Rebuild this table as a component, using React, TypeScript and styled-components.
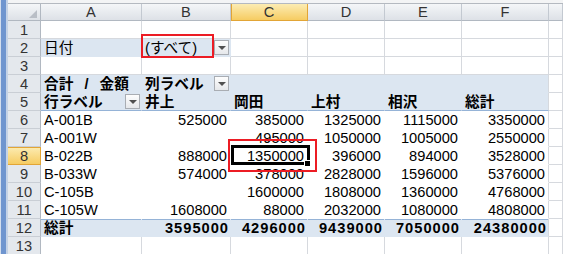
import React from 'react';
import styled, { createGlobalStyle } from 'styled-components';

const GlobalStyle = createGlobalStyle`
	html, body {
		margin: 0;
		padding: 0;
		background: #ffffff;
		overflow: hidden;
	}
	body {
		font-family: 'Liberation Sans', 'Noto Sans CJK JP', sans-serif;
		font-size: 14.67px;
		color: #000000;
	}
`;

type Row = { label: string; values: (number | null)[] };

const names = ['井上', '岡田', '上村', '相沢', '総計'];

const rows: Row[] = [
	{ label: 'A-001B', values: [525000, 385000, 1325000, 1115000, 3350000] },
	{ label: 'A-001W', values: [null, 495000, 1050000, 1005000, 2550000] },
	{ label: 'B-022B', values: [888000, 1350000, 396000, 894000, 3528000] },
	{ label: 'B-033W', values: [574000, 378000, 2828000, 1596000, 5376000] },
	{ label: 'C-105B', values: [null, 1600000, 1808000, 1360000, 4768000] },
	{ label: 'C-105W', values: [1608000, 88000, 2032000, 1080000, 4808000] },
];

const totals = [3595000, 4296000, 9439000, 7050000, 24380000];

const letters = ['A', 'B', 'C', 'D', 'E', 'F', ''];

const App = () => {
	return (
		<Window>
			<GlobalStyle />
			<FrameEdge />
			<Sheet>
				<TopStrip />
				<Grid>
					<Corner />
					{letters.map((l) => (
						<ColHead key={l || 'g'} $active={l === 'C'}>
							{l}
						</ColHead>
					))}

					<RowHead>1</RowHead>
					{letters.map((l) => (
						<Cell key={'r1' + l} />
					))}

					<RowHead>2</RowHead>
					<Cell $fill="band">日付</Cell>
					<Cell $fill="band" $anchor>
						<span>(すべて)</span>
						<Dropdown />
						<Mark $left={-1} $top={-5} $w={73} $h={24} />
					</Cell>
					{letters.slice(2).map((l) => (
						<Cell key={'r2' + l} />
					))}

					<RowHead>3</RowHead>
					{letters.map((l) => (
						<Cell key={'r3' + l} />
					))}

					<RowHead>4</RowHead>
					<Cell $fill="band" $bold>
						<Spaced>合計 / 金額</Spaced>
					</Cell>
					<Cell $fill="band" $bold>
						<span>列ラベル</span>
						<Dropdown />
					</Cell>
					<Cell $fill="band" />
					<Cell $fill="band" />
					<Cell $fill="band" />
					<Cell $fill="band" $edge />
					<Cell />

					<RowHead>5</RowHead>
					<Cell $fill="band" $bold $line="bottom">
						<span>行ラベル</span>
						<Dropdown />
					</Cell>
					{names.map((n, i) => (
						<Cell key={n} $fill="band" $bold $line="bottom" $edge={i === 4}>
							{n}
						</Cell>
					))}
					<Cell />

					{rows.map((r, ri) => (
						<React.Fragment key={r.label}>
							<RowHead $active={ri === 2}>{ri + 6}</RowHead>
							<Cell $fill="body">{r.label}</Cell>
							{r.values.map((v, vi) => (
								<Cell
									key={vi}
									$fill="body"
									$num
									$edge={vi === 4}
									$selected={ri === 2 && vi === 1}
									$anchor={ri === 2 && vi === 1}
								>
									{v ?? ''}
									{ri === 2 && vi === 1 && <Mark $left={-3} $top={-8} $w={89} $h={33} />}
								</Cell>
							))}
							<Cell />
						</React.Fragment>
					))}

					<RowHead>12</RowHead>
					<Cell $fill="band" $bold $line="top">
						総計
					</Cell>
					{totals.map((t, i) => (
						<Cell key={i} $fill="band" $bold $num $wide $line="top" $edge={i === 4}>
							{t}
						</Cell>
					))}
					<Cell />

					<RowHead>13</RowHead>
					{letters.map((l) => (
						<Cell key={'r13' + l} />
					))}
				</Grid>
			</Sheet>
		</Window>
	);
};

export default App;

const Window = styled.div`
	width: 563px;
	height: 254px;
	display: flex;
	overflow: hidden;
	background: #ffffff;
`;

const FrameEdge = styled.div`
	width: 8px;
	flex-shrink: 0;
	background: linear-gradient(
		to right,
		#d3deee 0 1px,
		#6f95cf 1px 6px,
		#c4d2e6 6px 8px
	);
`;

const Sheet = styled.div`
	flex: 1;
	display: flex;
	flex-direction: column;
	min-width: 0;
`;

const TopStrip = styled.div`
	height: 4px;
	flex-shrink: 0;
	box-sizing: border-box;
	background: #f3f4f5;
	border-bottom: 1px solid #b4b9c0;
`;

const Grid = styled.div`
	display: grid;
	grid-template-columns: 33px 101px 89px 77px 77px 77px 87px 1fr;
	grid-template-rows: 17px;
	grid-auto-rows: 18px;

	> * {
		box-sizing: border-box;
		min-width: 0;
	}
`;

const headBg = 'linear-gradient(#f4f6f8, #dde1e7)';
const activeBg = 'linear-gradient(#fcecb3, #f6cc62)';

const Corner = styled.div`
	position: relative;
	background: ${headBg};
	border-right: 1px solid #b1b8c1;
	border-bottom: 1px solid #b1b8c1;

	&::after {
		content: '';
		position: absolute;
		right: 3px;
		bottom: 2px;
		border-style: solid;
		border-width: 0 0 8px 8px;
		border-color: transparent transparent #b9bec6 transparent;
	}
`;

const ColHead = styled.div<{ $active?: boolean }>`
	display: flex;
	align-items: center;
	justify-content: center;
	line-height: 16px;
	color: #333333;
	background: ${(p) => (p.$active ? activeBg : headBg)};
	border-right: 1px solid ${(p) => (p.$active ? '#e2a536' : '#c3c9d1')};
	border-bottom: 1px solid ${(p) => (p.$active ? '#e2a536' : '#b1b8c1')};
	box-shadow: ${(p) => (p.$active ? 'inset 1px 0 0 #e2a536' : 'none')};
`;

const RowHead = styled.div<{ $active?: boolean }>`
	display: flex;
	align-items: flex-end;
	justify-content: center;
	line-height: 16px;
	color: #333333;
	background: ${(p) => (p.$active ? activeBg : '#e4e8ed')};
	border-right: 1px solid ${(p) => (p.$active ? '#e2a536' : '#b1b8c1')};
	border-bottom: 1px solid ${(p) => (p.$active ? '#e2a536' : '#c9ced5')};
	box-shadow: ${(p) => (p.$active ? 'inset 0 1px 0 #e2a536' : 'none')};
`;

type CellProps = {
	$fill?: 'plain' | 'band' | 'body';
	$bold?: boolean;
	$num?: boolean;
	$wide?: boolean;
	$edge?: boolean;
	$line?: 'top' | 'bottom';
	$selected?: boolean;
	$anchor?: boolean;
};

const grid = '#d6d9de';
const bandLine = '#95b3d7';

const Cell = styled.div<CellProps>`
	position: ${(p) => (p.$anchor ? 'relative' : 'static')};
	display: flex;
	align-items: flex-end;
	justify-content: ${(p) => (p.$num ? 'flex-end' : 'space-between')};
	line-height: 16px;
	padding: 0 ${(p) => (p.$num ? (p.$wide ? '1px' : '3px') : '1px')} 0 3px;
	white-space: nowrap;
	font-weight: ${(p) => (p.$bold ? 700 : 400)};
	letter-spacing: ${(p) => (p.$wide ? '1px' : '0')};
	background: ${(p) => (p.$fill === 'band' ? '#dce6f1' : '#ffffff')};
	border-right: 1px solid
		${(p) => (!p.$fill || p.$fill === 'plain' || p.$edge ? grid : 'transparent')};
	border-bottom: 1px solid
		${(p) =>
			p.$line === 'bottom'
				? bandLine
				: !p.$fill || p.$fill === 'plain'
				? grid
				: 'transparent'};
	box-shadow: ${(p) => (p.$line === 'top' ? `inset 0 1px 0 ${bandLine}` : 'none')};

	${(p) =>
		p.$selected &&
		`
		&::before {
			content: '';
			position: absolute;
			left: 0;
			top: -2px;
			right: -3px;
			bottom: -1px;
			border: 3px solid #000000;
		}
		&::after {
			content: '';
			position: absolute;
			right: -4px;
			bottom: -3px;
			width: 5px;
			height: 5px;
			background: #000000;
			border: 1px solid #ffffff;
		}
	`}
`;

const Spaced = styled.span`
	word-spacing: 7px;
`;

const Dropdown = styled.div`
	width: 15px;
	height: 15px;
	flex-shrink: 0;
	margin-bottom: 1px;
	box-sizing: border-box;
	display: flex;
	align-items: center;
	justify-content: center;
	border: 1px solid #a9adb3;
	background: linear-gradient(#fdfdfd, #e6e8eb);

	&::after {
		content: '';
		border-left: 4px solid transparent;
		border-right: 4px solid transparent;
		border-top: 4px solid #505050;
		margin-top: 1px;
	}
`;

const Mark = styled.div<{ $left: number; $top: number; $w: number; $h: number }>`
	position: absolute;
	z-index: 2;
	left: ${(p) => p.$left}px;
	top: ${(p) => p.$top}px;
	width: ${(p) => p.$w}px;
	height: ${(p) => p.$h}px;
	box-sizing: border-box;
	border: 2px solid #ec1c24;
	pointer-events: none;
`;
